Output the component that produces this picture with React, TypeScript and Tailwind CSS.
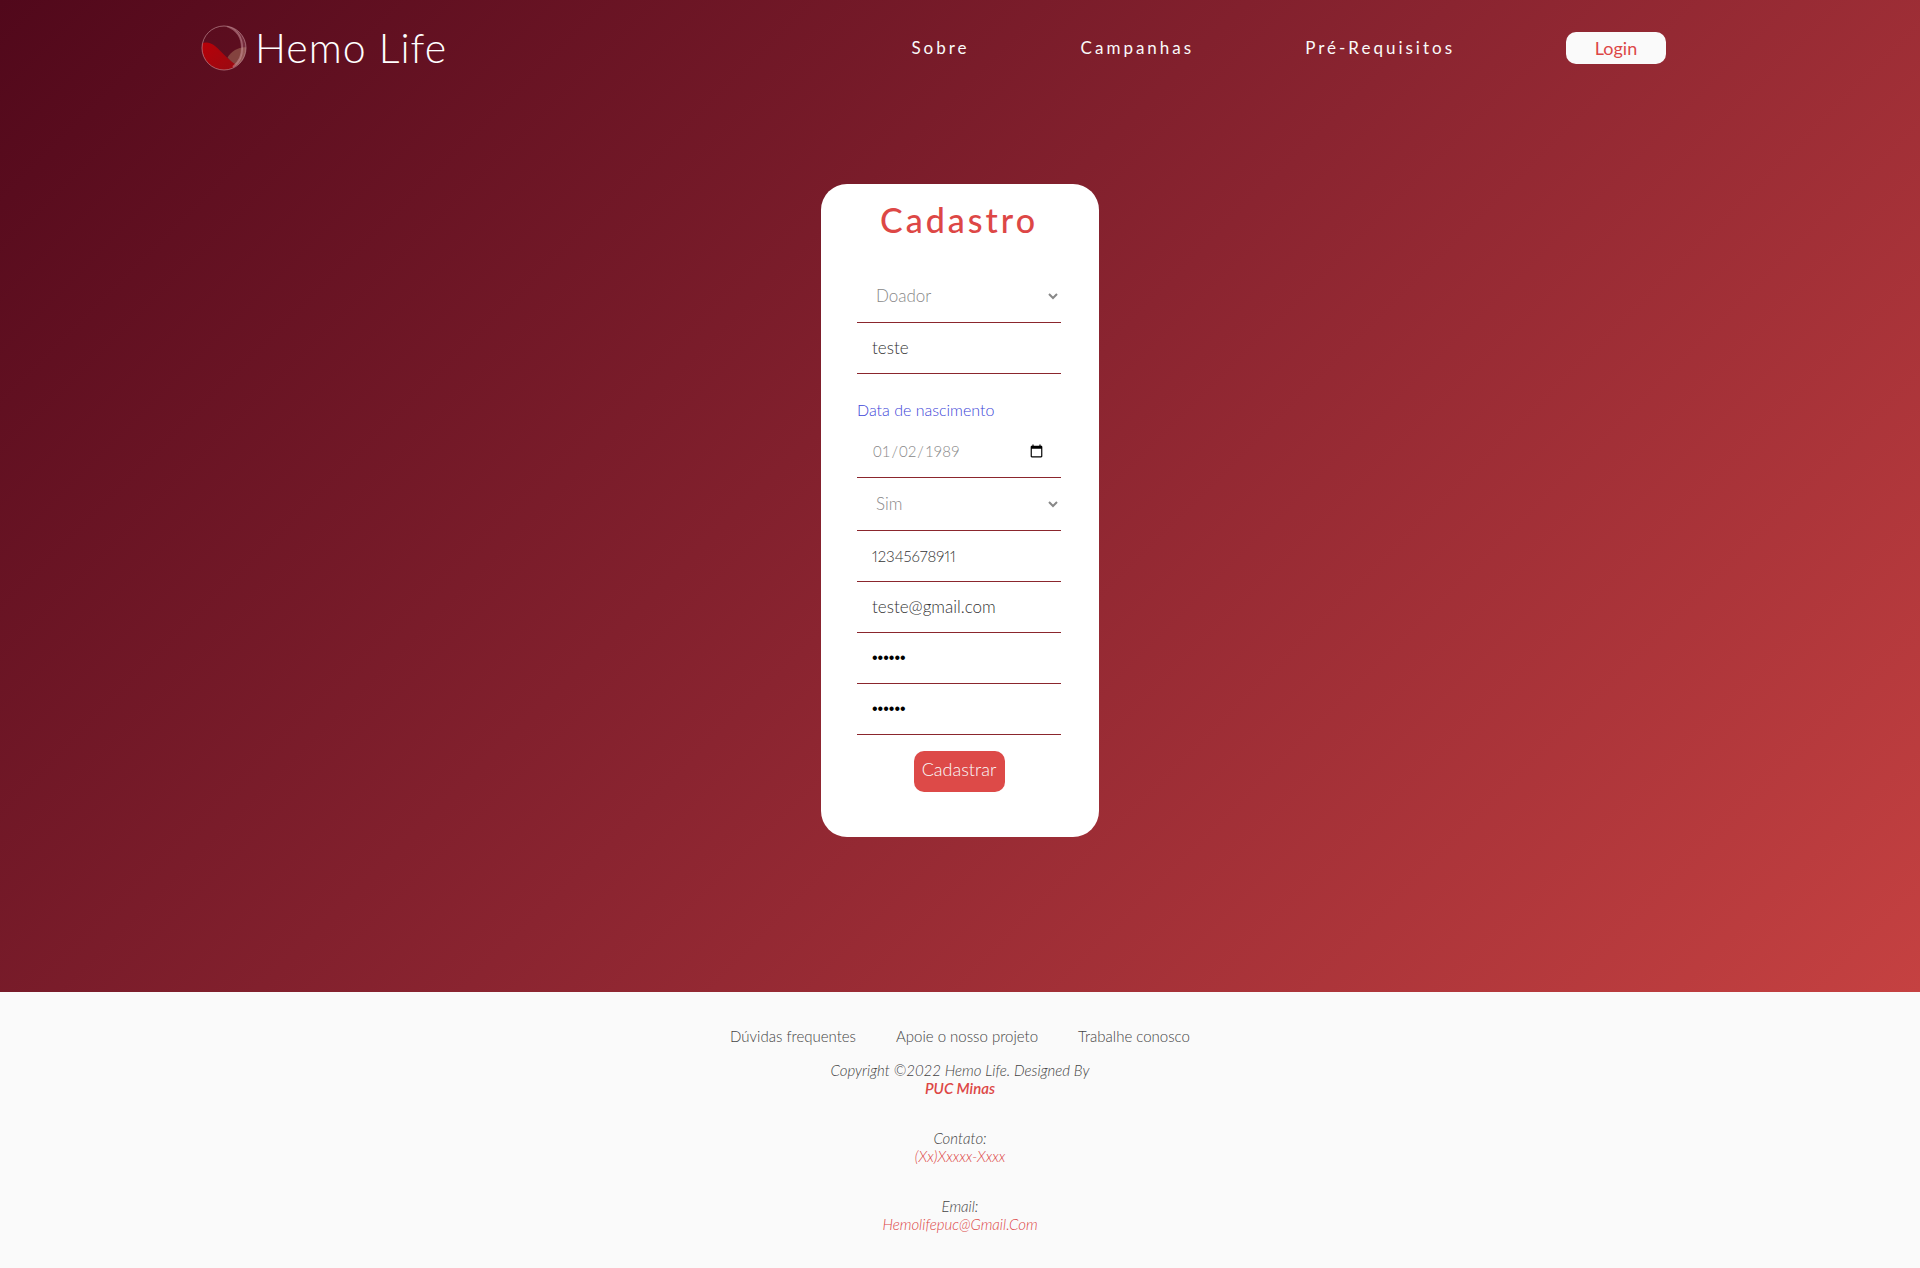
import React from "react";

function Logo() {
  return (
    <svg viewBox="0 0 46 46" className="size-[46px]" aria-hidden="true">
      <defs>
        <clipPath id="drop">
          <circle cx="23" cy="23" r="22" />
        </clipPath>
        <linearGradient id="blood" x1="0" y1="0" x2="1" y2="1">
          <stop offset="0" stopColor="#b80008" />
          <stop offset="1" stopColor="#980a12" />
        </linearGradient>
      </defs>
      <g clipPath="url(#drop)">
        <path d="M46 22.5C38 21.5 31 26 26.5 32.5L34 41L46 40Z" fill="#84433f" />
        <path d="M0 18.5C5 16.5 10 17.5 14 21C21 27 27 35 35 39.5L30 46H0Z" fill="url(#blood)" />
        <path d="M24 0.5C35 3 41 12 41 23C41 32 38 37 31 43C40 39 45 33 45 23C45 10 36 2 24 0.5Z" fill="#d9a5ab" fillOpacity="0.22" />
        <path d="M26 1C37 5 41 13 41 23C41 31 39 36 32 42" fill="none" stroke="#d9a5ab" strokeOpacity="0.45" strokeWidth="2" />
      </g>
      <circle cx="23" cy="23" r="22" fill="none" stroke="#c99aa0" strokeOpacity="0.6" />
    </svg>
  );
}

const textField =
  "block w-full h-[51px] border-b border-[#8b262d] bg-transparent px-[15px] pb-px text-[17px] font-light text-[#333] outline-none";
const numberField =
  "block w-full h-[51px] border-b border-[#8b262d] bg-transparent px-[15px] pb-px text-[15px] font-light proportional-nums text-[#333] outline-none";
const dateField =
  "block w-full h-[51px] border-b border-[#8b262d] bg-transparent px-[15px] pb-px text-[15px] font-light text-[#888] outline-none";
const passwordField =
  "block w-full h-[51px] border-b border-[#8b262d] bg-transparent px-[15px] font-['Liberation_Sans',sans-serif] text-base text-black outline-none";
const choice =
  "block w-full h-[53px] border-b border-[#8b262d] bg-transparent pl-[15px] pb-px text-[17px] font-light text-[#888] outline-none";

const navLinks = ["Sobre", "Campanhas", "Pré-Requisitos"];
const footerLinks = ["Dúvidas frequentes", "Apoie o nosso projeto", "Trabalhe conosco"];

export default function App() {
  return (
    <div className="flex min-h-screen flex-col bg-[#fafafa] font-['Lato',sans-serif]">
      <div className="bg-[linear-gradient(135deg,#51081b_0%,#8a2430_50%,#c54141_100%)] pb-[155px]">
        <header className="flex h-[95px] items-center justify-between pr-[254px] pl-[201px]">
          <a href="#" className="flex items-center gap-2 text-white">
            <Logo />
            <span className="text-[41px] font-light tracking-[1px]">Hemo Life</span>
          </a>
          <nav className="flex items-center gap-[111px]">
            {navLinks.map((l) => (
              <a key={l} href="#" className="text-[17px] tracking-[3px] text-[#fafafa]">
                {l}
              </a>
            ))}
            <button className="h-8 w-[100px] rounded-[10px] bg-[#fafafa] text-lg leading-none text-[#dd4746]">Login</button>
          </nav>
        </header>

        <main className="mt-[89px] flex justify-center">
          <form className="w-[278px] rounded-[26px] bg-white pt-4 pr-[38px] pb-[45px] pl-9" onSubmit={(e) => e.preventDefault()}>
            <h1 className="mb-[30px] text-center text-[34px] leading-10 font-medium tracking-[3px] text-[#dd4746]">Cadastro</h1>
            <select aria-label="Tipo de cadastro" className={choice} defaultValue="Doador">
              <option>Doador</option>
              <option>Hemocentro</option>
            </select>
            <input aria-label="Nome" className={textField} defaultValue="teste" />
            <label htmlFor="nascimento" className="mt-[26px] mb-[7px] block text-base leading-5 font-light text-[#3d45d8]">
              Data de nascimento
            </label>
            <input id="nascimento" type="date" className={dateField} defaultValue="1989-01-02" />
            <select aria-label="Doador de sangue" className={choice} defaultValue="Sim">
              <option>Sim</option>
              <option>Não</option>
            </select>
            <input aria-label="CPF" className={numberField} defaultValue="12345678911" />
            <input aria-label="Email" type="email" className={textField} defaultValue="teste@gmail.com" />
            <input aria-label="Senha" type="password" className={passwordField} defaultValue="123456" />
            <input aria-label="Confirmar senha" type="password" className={passwordField} defaultValue="123456" />
            <div className="mt-4 flex justify-center">
              <button className="h-[41px] w-[91px] rounded-[10px] bg-[#dd4a48] pb-1.5 text-lg font-light text-[#fafafa]">
                Cadastrar
              </button>
            </div>
          </form>
        </main>
      </div>

      <footer className="flex flex-col items-center pt-[35px] text-center text-[15px] leading-[18px] font-light text-[#444]">
        <div className="flex gap-10">
          {footerLinks.map((l) => (
            <a key={l} href="#">
              {l}
            </a>
          ))}
        </div>
        <p className="mt-4 italic">
          Copyright ©2022 Hemo Life. Designed By
          <a href="#" className="block font-semibold text-[#dd4746]">
            PUC Minas
          </a>
        </p>
        <p className="mt-8 italic">
          Contato:
          <a href="#" className="block text-[#dd4746]">
            (Xx)Xxxxx-Xxxx
          </a>
        </p>
        <p className="mt-8 italic">
          Email:
          <a href="#" className="block text-[#dd4746]">
            Hemolifepuc@Gmail.Com
          </a>
        </p>
      </footer>
    </div>
  );
}
